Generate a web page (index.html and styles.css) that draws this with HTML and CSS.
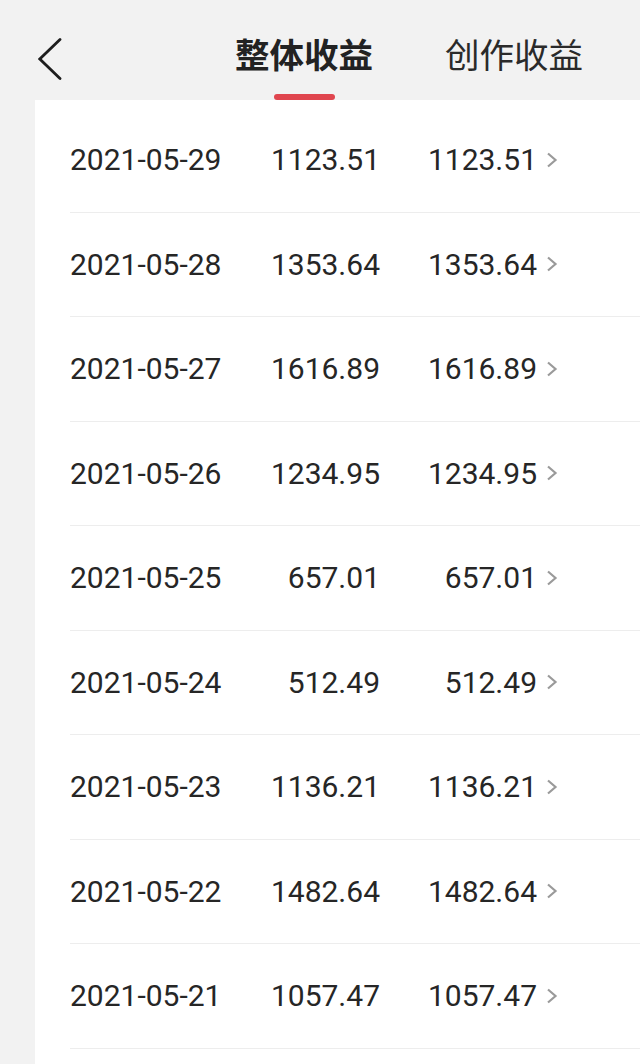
FILE: index.html
```html
<!DOCTYPE html>
<html lang="zh-CN">
<head>
<meta charset="utf-8">
<title>收益明细</title>
<link rel="stylesheet" href="styles.css">
</head>
<body>
<header class="header">
  <div class="back">
    <svg width="24" height="42" viewBox="0 0 24 42"><polyline points="22,1.5 1.8,21 22,40.5" fill="none" stroke="#1e1e1e" stroke-width="2.8" stroke-linecap="round" stroke-linejoin="miter"/></svg>
  </div>
  <nav class="tabs">
    <div class="tab active"><span class="tab-text">整体收益</span><span class="tab-line"></span></div>
    <div class="tab"><span class="tab-text">创作收益</span></div>
  </nav>
</header>
<main class="card">
  <div class="row"><span class="date">2021-05-29</span><span class="num">1123.51</span><span class="num">1123.51</span><svg class="chev" width="12" height="16" viewBox="0 0 12 16"><polyline points="2,1.5 9.5,8 2,14.5" fill="none" stroke="#9a9a9a" stroke-width="2.2"/></svg></div>
  <div class="row"><span class="date">2021-05-28</span><span class="num">1353.64</span><span class="num">1353.64</span><svg class="chev" width="12" height="16" viewBox="0 0 12 16"><polyline points="2,1.5 9.5,8 2,14.5" fill="none" stroke="#9a9a9a" stroke-width="2.2"/></svg></div>
  <div class="row"><span class="date">2021-05-27</span><span class="num">1616.89</span><span class="num">1616.89</span><svg class="chev" width="12" height="16" viewBox="0 0 12 16"><polyline points="2,1.5 9.5,8 2,14.5" fill="none" stroke="#9a9a9a" stroke-width="2.2"/></svg></div>
  <div class="row"><span class="date">2021-05-26</span><span class="num">1234.95</span><span class="num">1234.95</span><svg class="chev" width="12" height="16" viewBox="0 0 12 16"><polyline points="2,1.5 9.5,8 2,14.5" fill="none" stroke="#9a9a9a" stroke-width="2.2"/></svg></div>
  <div class="row"><span class="date">2021-05-25</span><span class="num">657.01</span><span class="num">657.01</span><svg class="chev" width="12" height="16" viewBox="0 0 12 16"><polyline points="2,1.5 9.5,8 2,14.5" fill="none" stroke="#9a9a9a" stroke-width="2.2"/></svg></div>
  <div class="row"><span class="date">2021-05-24</span><span class="num">512.49</span><span class="num">512.49</span><svg class="chev" width="12" height="16" viewBox="0 0 12 16"><polyline points="2,1.5 9.5,8 2,14.5" fill="none" stroke="#9a9a9a" stroke-width="2.2"/></svg></div>
  <div class="row"><span class="date">2021-05-23</span><span class="num">1136.21</span><span class="num">1136.21</span><svg class="chev" width="12" height="16" viewBox="0 0 12 16"><polyline points="2,1.5 9.5,8 2,14.5" fill="none" stroke="#9a9a9a" stroke-width="2.2"/></svg></div>
  <div class="row"><span class="date">2021-05-22</span><span class="num">1482.64</span><span class="num">1482.64</span><svg class="chev" width="12" height="16" viewBox="0 0 12 16"><polyline points="2,1.5 9.5,8 2,14.5" fill="none" stroke="#9a9a9a" stroke-width="2.2"/></svg></div>
  <div class="row"><span class="date">2021-05-21</span><span class="num">1057.47</span><span class="num">1057.47</span><svg class="chev" width="12" height="16" viewBox="0 0 12 16"><polyline points="2,1.5 9.5,8 2,14.5" fill="none" stroke="#9a9a9a" stroke-width="2.2"/></svg></div>
</main>
</body>
</html>
```
FILE: styles.css
```css
html, body {
  margin: 0;
  padding: 0;
}
body {
  background: #f2f2f2;
  font-family: Roboto, "Noto Sans CJK SC", sans-serif;
  color: #262626;
  overflow: hidden;
}
.header {
  height: 100px;
  display: flex;
  align-items: flex-start;
  padding-left: 38px;
}
.back {
  margin-top: 38px;
  width: 24px;
  height: 42px;
}
.back svg {
  display: block;
}
.tabs {
  display: flex;
  margin-left: 173px;
  gap: 72px;
}
.tab {
  height: 100px;
  display: flex;
  flex-direction: column;
  align-items: center;
}
.tab-text {
  margin-top: 36px;
  font-family: "Noto Sans CJK SC", sans-serif;
  font-size: 34.5px;
  line-height: 34px;
  color: #2a2a2a;
}
.tab.active .tab-text {
  font-weight: 700;
  color: #222;
}
.tab-line {
  margin-top: 24px;
  width: 61px;
  height: 6px;
  border-radius: 3px;
  background: #e0464f;
}
.card {
  margin-left: 35px;
  background: #fff;
  padding-top: 8px;
  padding-bottom: 40px;
}
.row {
  margin-left: 35px;
  height: 104.5px;
  box-sizing: border-box;
  border-bottom: 1px solid #ededed;
  display: grid;
  grid-template-columns: 160px 150px 157px auto;
  align-items: center;
  font-size: 30px;
}
.date {
  text-align: left;
}
.num {
  text-align: right;
}
.chev {
  display: block;
  margin-left: 9px;
}
```
